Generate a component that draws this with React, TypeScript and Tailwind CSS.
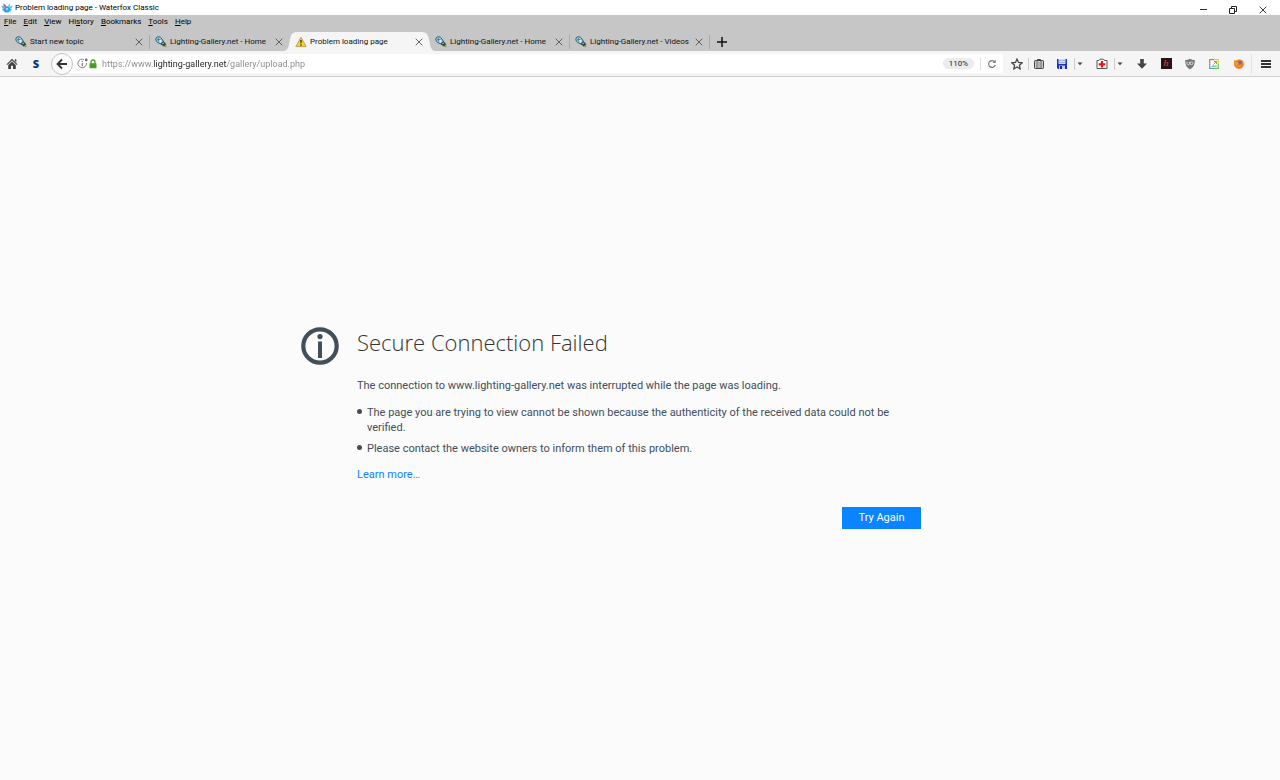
import type { ReactNode } from "react";

interface Tab {
  title: string;
  active?: boolean;
  warning?: boolean;
}

const tabs: Tab[] = [
  { title: "Start new topic" },
  { title: "Lighting-Gallery.net - Home" },
  { title: "Problem loading page", active: true, warning: true },
  { title: "Lighting-Gallery.net - Home" },
  { title: "Lighting-Gallery.net - Videos" },
];

const menus = ["File", "Edit", "View", "History", "Bookmarks", "Tools", "Help"];

// position of the underlined access key in each menu label
const accessKeys: Record<string, number> = { History: 2 };

const WaterfoxLogo = () => (
  <svg viewBox="0 0 12 10" className="h-2.5 w-3 shrink-0">
    <path d="M0.3 2.2 3.5 3.8 2.5 5.5 5 8.8H3.2L1 6.5 1.8 5.5Z" fill="#35c3f5" />
    <path d="M3 4.5 6 3 9 4.5 9.5 7.5 7.5 9.5H4.5L2.8 7.5Z" fill="#2e9ef5" />
    <path d="M11.7 2.2 8.5 3.8 9.5 5.5 7.5 8.8H9L11 6.5 10.2 5.5Z" fill="#35d3f5" />
    <path d="M2.3 0.6 5 2.2 4.7 4.3 2.6 3.6Z" fill="#ef4b62" />
    <path d="M9 0.8 7 2.2 7.2 4.2 9.2 3.3Z" fill="#7fc4f7" />
    <path d="M4.8 5.8 6 7.5 7.2 5.8 6 5Z" fill="#d8f2ff" />
  </svg>
);

const LampIcon = () => (
  <svg viewBox="0 0 12 12" className="size-3 shrink-0">
    <path
      d="M1.2 1.8C2.8 0.3 5.3 0.5 6.3 2L8.3 5.3 5.7 8 2.4 6.3C0.9 5.1 0.6 3.2 1.2 1.8Z"
      fill="#9fdcec"
      stroke="#1c4f60"
      strokeWidth="0.9"
    />
    <path d="M3.3 1.8 3.5 5.5M2.2 3.8 5.5 3.2" stroke="#27667a" strokeWidth="0.7" />
    <path d="M5.5 4 5.8 6.5" stroke="#e9fbff" strokeWidth="0.9" />
    <path d="M5.5 8 8.3 5 11.3 8.2 8.8 10.6Z" fill="#2f3f45" />
    <path d="M7 7.5 8.3 6.3 9.3 7.5 8 8.5Z" fill="#7fb8c8" />
    <path d="M9 10.5 11.2 8.6 11.6 10.8 10.5 11.6Z" fill="#8fa63c" />
  </svg>
);

const WarningIcon = () => (
  <svg viewBox="0 0 12 12" className="size-3 shrink-0">
    <path
      d="M6 1.3 11.2 10.6H0.8Z"
      fill="#ffd21f"
      stroke="#b5a269"
      strokeWidth="1"
      strokeLinejoin="round"
    />
    <path d="M5.3 4h1.4l-.3 3.6h-.8z" fill="#222" />
    <circle cx="6" cy="9" r="0.8" fill="#222" />
  </svg>
);

const CloseIcon = ({ className }: { className: string }) => (
  <svg viewBox="0 0 8 8" className={className} fill="none" stroke="currentColor">
    <path d="M0.7 0.7 7.3 7.3M7.3 0.7 0.7 7.3" strokeWidth="0.9" />
  </svg>
);

// sloped side of the selected tab, mirrored for the right end
const TabEdge = ({ right }: { right?: boolean }) => (
  <svg
    viewBox="0 0 14 19"
    className={`absolute top-0 h-[19px] w-3.5 ${right ? "-right-1.5 -scale-x-100" : "-left-1.5"}`}
  >
    <path d="M0 19C4 18 4.5 15 5.5 10C6.5 4 7.5 0 13 0H14V19Z" fill="#f5f5f5" />
  </svg>
);

const TabItem = ({ title, active, warning }: Tab) => (
  <div className="relative flex w-[139px] min-w-0 items-center pl-[5px]">
    {active && (
      <>
        <TabEdge />
        <span className="absolute inset-y-0 right-2 left-2 bg-[#f5f5f5]" />
        <TabEdge right />
      </>
    )}
    <button className="relative flex min-w-0 flex-1 items-center gap-[3px] text-left">
      {warning ? <WarningIcon /> : <LampIcon />}
      <span className="flex-1 whitespace-nowrap">{title}</span>
    </button>
    <button aria-label="Close tab" className="relative mr-1.5 shrink-0 text-[#555]">
      <CloseIcon className="size-2" />
    </button>
  </div>
);

const TabDivider = ({ hidden }: { hidden?: boolean }) => (
  <span className={`h-3.5 w-px self-center ${hidden ? "" : "bg-[#aaa]"}`} />
);

const ToolButton = ({
  label,
  className = "w-6",
  children,
}: {
  label: string;
  className?: string;
  children: ReactNode;
}) => (
  <button aria-label={label} className={`flex h-5 shrink-0 items-center justify-center ${className}`}>
    {children}
  </button>
);

const Divider = () => <span className="-mr-px h-3 w-px shrink-0 bg-[#ccc]" />;

const Caret = () => (
  <svg viewBox="0 0 6 4" className="h-1 w-1.5" fill="#444">
    <path d="M0.5 0.5H5.5L3 3.2Z" />
  </svg>
);

const TitleBar = () => (
  <header className="flex h-[15px] items-center bg-white pl-px text-black">
    <WaterfoxLogo />
    <h1 className="ml-0.5 flex-1">Problem loading page - Waterfox Classic</h1>
    <div className="flex pt-1 pr-0.5 text-[#222]">
      <button aria-label="Minimize" className="flex w-[30px] items-center justify-center">
        <span className="h-px w-[7px] bg-[#333]" />
      </button>
      <button aria-label="Restore" className="flex w-[30px] items-center justify-center">
        <svg viewBox="0 0 8 8" className="size-2" fill="none" stroke="currentColor">
          <path d="M0.5 2.5h5v5h-5zM2.5 2.5v-2h5v5h-2" />
        </svg>
      </button>
      <button aria-label="Close" className="flex w-[30px] items-center justify-center">
        <CloseIcon className="size-2" />
      </button>
    </div>
  </header>
);

const MenuBar = () => (
  <nav className="flex h-3.5 items-center gap-[7px] pl-1 text-black">
    {menus.map((menu) => {
      const key = accessKeys[menu] ?? 0;
      return (
        <button key={menu}>
          {menu.slice(0, key)}
          <span className="underline">{menu[key]}</span>
          {menu.slice(key + 1)}
        </button>
      );
    })}
  </nav>
);

const NavBar = () => (
  <div className="flex h-[26px] items-center border-b border-[#d0d0d0] bg-[#f5f5f5]">
    <ToolButton label="Home">
      <svg viewBox="0 0 12 12" className="size-3" fill="#444">
        <path d="M6 0.8 11.5 6.2 10.8 7 6 2.5 1.2 7 0.5 6.2Z" />
        <path d="M8.8 1.3h1.5v3L8.8 2.9z" />
        <path d="M2.2 7 6 3.5 9.8 7V11H7V7.8H5V11H2.2Z" />
      </svg>
    </ToolButton>
    <ToolButton label="Startpage">
      <span className="font-['Open_Sans',sans-serif] text-[11px] font-extrabold text-[#12347f]">S</span>
    </ToolButton>
    <button
      aria-label="Back"
      className="z-10 ml-[3px] flex size-[22px] shrink-0 items-center justify-center rounded-full border border-[#c4c4c4] bg-[#fbfbfb]"
    >
      <svg viewBox="0 0 12 12" className="size-3" fill="none" stroke="#333" strokeWidth="1.8">
        <path d="M11 6H2M6 1.5 1.5 6 6 10.5" />
      </svg>
    </button>
    <div className="-ml-1.5 flex h-[19px] flex-1 items-center bg-white pl-2.5">
      <button aria-label="Site information" className="shrink-0">
        <svg viewBox="0 0 11 11" className="size-[11px]" fill="none" stroke="#777">
          <path d="M7 1.5A4.3 4.3 0 1 0 9.5 5" strokeWidth="0.9" />
          <path d="M5.3 5v3.2M5.3 2.9v1.2" strokeWidth="1.2" />
          <circle cx="9.2" cy="1.9" r="1.3" fill="#666" stroke="none" />
        </svg>
      </button>
      <svg viewBox="0 0 8 10" className="ml-px h-2.5 w-2 shrink-0">
        <path d="M2 5V3a2 2 0 0 1 4 0v2" fill="none" stroke="#4a9a2a" strokeWidth="1.3" />
        <rect x="0.5" y="4.3" width="7" height="5" rx="0.5" fill="#4a9a2a" />
      </svg>
      {/* the host name is darker than the rest of the address */}
      <input
        type="text"
        aria-label="Address"
        defaultValue="https://www.lighting-gallery.net/gallery/upload.php"
        className="ml-[5px] min-w-0 flex-1 bg-[linear-gradient(to_right,#888_51px,#222_51px,#222_125px,#888_125px)] bg-clip-text text-[9px] text-transparent caret-black outline-none"
      />
      <button className="rounded-full bg-[#ececec] px-1.5 py-px text-[8px] leading-[9px] text-[#222]">
        110%
      </button>
      <span className="ml-1.5 h-3 w-px bg-[#ddd]" />
      <ToolButton label="Reload" className="w-[22px]">
        <svg viewBox="0 0 10 10" className="size-2.5" fill="none" stroke="#777" strokeWidth="1.2">
          <path d="M7.8 2.9A3.4 3.4 0 1 0 8.3 6" />
          <path d="M8.7 0.8V4H5.5Z" fill="#777" stroke="none" />
        </svg>
      </ToolButton>
    </div>
    <ToolButton label="Bookmark this page" className="ml-0.5 w-[23px]">
      <svg viewBox="0 0 12 12" className="size-3" fill="none" stroke="#444" strokeWidth="1.2">
        <path d="M6 1 7.5 4.4 11.2 4.8 8.4 7.2 9.2 10.9 6 9 2.8 10.9 3.6 7.2 0.8 4.8 4.5 4.4Z" />
      </svg>
    </ToolButton>
    <Divider />
    <ToolButton label="Show bookmarks" className="w-[22px]">
      <svg viewBox="0 0 12 12" className="size-3" fill="none" stroke="#444">
        <path d="M4.5 2.5V1.5H7.5V2.5" />
        <rect x="1.5" y="2.5" width="9" height="8" rx="0.8" fill="#ccc" />
        <path d="M4 3v7.5M8 3v7.5" stroke="#666" />
        <path d="M6 4v6" stroke="#999" />
      </svg>
    </ToolButton>
    <ToolButton label="Save">
      <svg viewBox="0 0 12 12" className="size-3">
        <path d="M1 1h10v10H2L1 10z" fill="#1a33b8" />
        <rect x="2.5" y="1" width="7" height="5" fill="#cfdcff" />
        <path d="M3 2.5h6M3 4.5h6" stroke="#7f9ae8" strokeWidth="0.6" />
        <rect x="3" y="7.5" width="6" height="3.5" fill="#c8cce0" />
        <rect x="4" y="8" width="2" height="3" fill="#11269a" />
      </svg>
    </ToolButton>
    <Divider />
    <ToolButton label="Save options" className="mr-1 w-3">
      <Caret />
    </ToolButton>
    <ToolButton label="First aid">
      <svg viewBox="0 0 12 12" className="size-3">
        <path d="M1 10.5V2.5h2L4 1.2h3.5l1 1.3H11v8z" fill="#fff" stroke="#444" strokeWidth="0.9" />
        <path d="M4.9 3h2.2v2.200h2.200v2.200h-2.200v2.200H4.900V7.400H2.700V5.200h2.200z" fill="#ee1218" />
      </svg>
    </ToolButton>
    <Divider />
    <ToolButton label="First aid options" className="mr-1 w-3">
      <Caret />
    </ToolButton>
    <ToolButton label="Downloads">
      <svg viewBox="0 0 12 12" className="size-3" fill="#444">
        <path d="M4.2 1h3.600v4.500H11L6 10.800 1 5.500h3.200z" />
      </svg>
    </ToolButton>
    <ToolButton label="h extension">
      <span className="flex size-[11px] items-center justify-center bg-[#211718] font-['Liberation_Serif',serif] text-[9px] leading-none font-bold text-[#d1282e] italic">
        h
      </span>
    </ToolButton>
    <ToolButton label="uBlock Origin">
      <svg viewBox="0 0 12 12" className="size-3">
        <path d="M6 0.8C7.5 1.8 9 2 10.8 2 10.8 6.5 10 9 6 11.3 2 9 1.2 6.5 1.2 2 3 2 4.5 1.8 6 0.8Z" fill="#777" />
        <path d="M3 3.8v2q0 1 1.200 1t1.200-1v-2" fill="none" stroke="#eee" strokeWidth="0.8" />
        <circle cx="7.5" cy="5.3" r="1.4" fill="none" stroke="#eee" strokeWidth="0.8" />
      </svg>
    </ToolButton>
    <ToolButton label="Image search">
      <svg viewBox="0 0 12 12" className="size-3" fill="none" strokeWidth="1.2">
        <rect x="1.5" y="1.5" width="9" height="9" fill="#fff" stroke="none" />
        <path d="M1.7 5.5V1.7H6" stroke="#e8665c" />
        <path d="M6 1.7h4.300V6" stroke="#f3c433" />
        <path d="M10.3 6v4.300H6" stroke="#69c25b" />
        <path d="M6 10.3H1.700V5.500" stroke="#5594ea" />
        <path d="M5.5 6.5 8.3 3.7M6 3.5h2.500V6" stroke="#65b95c" strokeWidth="1" />
        <path d="M3 8.8 5 7 6.500 8 8.500 6.800V8.800Z" fill="#69c25b" />
      </svg>
    </ToolButton>
    <ToolButton label="Firefox" className="w-[25px]">
      <svg viewBox="0 0 12 12" className="size-3">
        <path d="M1.2 2 3 2.8C5 0.8 8.5 1 10 3L10.6 5C11.5 8 9.3 10.8 6.3 10.8 3 10.8 1 8.5 1 6Z" fill="#f47b20" />
        <circle cx="7" cy="4.8" r="1.8" fill="#4a78b8" />
        <path d="M1.2 4.5C3 3.5 4 4.5 6 5.3L4.5 6.5C5 8 7 8.3 8.5 7 7.5 10 3.5 9.5 2.3 7Z" fill="#ff9823" />
      </svg>
    </ToolButton>
    <span className="h-5 w-px bg-[#e3e3e3]" />
    <ToolButton label="Open menu" className="w-7">
      <svg viewBox="0 0 12 10" className="h-2.5 w-3" fill="#333">
        <path d="M1 1h10v2H1zM1 4h10v2H1zM1 7h10v2H1z" />
      </svg>
    </ToolButton>
  </div>
);

const ErrorPage = () => (
  <main className="flex flex-1 items-center justify-center bg-[#fbfbfb] pr-[58px] pb-0.5 text-[11px] leading-[15px] text-[#424e5a]">
    <div className="flex w-full max-w-[620px] gap-[18px]">
      <svg viewBox="0 0 38 38" className="size-[38px] shrink-0" fill="#424e5a">
        <circle cx="19" cy="19" r="16.7" fill="none" stroke="#424e5a" strokeWidth="4.2" />
        <circle cx="19" cy="9.6" r="2.6" />
        <rect x="17" y="14.5" width="4" height="16.5" />
      </svg>
      <div className="flex-1">
        <h2 className="font-['Open_Sans','Noto_Sans',sans-serif] text-[22px] leading-[30px] font-light text-[#333]">
          Secure Connection Failed
        </h2>
        <p className="mt-[21px]">
          The connection to www.lighting-gallery.net was interrupted while the page was loading.
        </p>
        <ul className="mt-3 flex flex-col gap-1.5">
          <li className="flex gap-[5px]">
            <span className="mt-1 size-[5px] shrink-0 rounded-full bg-[#424e5a]" />
            <span className="max-w-[540px]">
              The page you are trying to view cannot be shown because the authenticity of the received
              data could not be verified.
            </span>
          </li>
          <li className="flex gap-[5px]">
            <span className="mt-1 size-[5px] shrink-0 rounded-full bg-[#424e5a]" />
            Please contact the website owners to inform them of this problem.
          </li>
        </ul>
        <p className="mt-[11px]">
          <a href="#learn-more" className="text-[#0a84ff]">
            Learn more…
          </a>
        </p>
        <div className="mt-[25px] flex justify-end">
          <button className="h-[22px] w-[79px] bg-[#0a84ff] text-white">Try Again</button>
        </div>
      </div>
    </div>
  </main>
);

export default function App() {
  return (
    <div className="flex min-h-screen flex-col bg-[#c6c6c6] font-[Roboto,'Noto_Sans',sans-serif] text-[8px] leading-3 text-[#111]">
      <TitleBar />
      <MenuBar />
      <div className="mt-[3px] flex h-[19px] pl-2.5">
        {tabs.map((tab, i) => (
          <div key={i} className="flex">
            <TabItem {...tab} />
            <TabDivider hidden={tab.active || tabs[i + 1]?.active} />
          </div>
        ))}
        <button aria-label="New tab" className="ml-[5px] flex items-center px-0.5">
          <svg viewBox="0 0 10 10" className="size-2.5" stroke="#111" strokeWidth="1.5">
            <path d="M5 0V10M0 5H10" />
          </svg>
        </button>
      </div>
      <NavBar />
      <ErrorPage />
    </div>
  );
}
